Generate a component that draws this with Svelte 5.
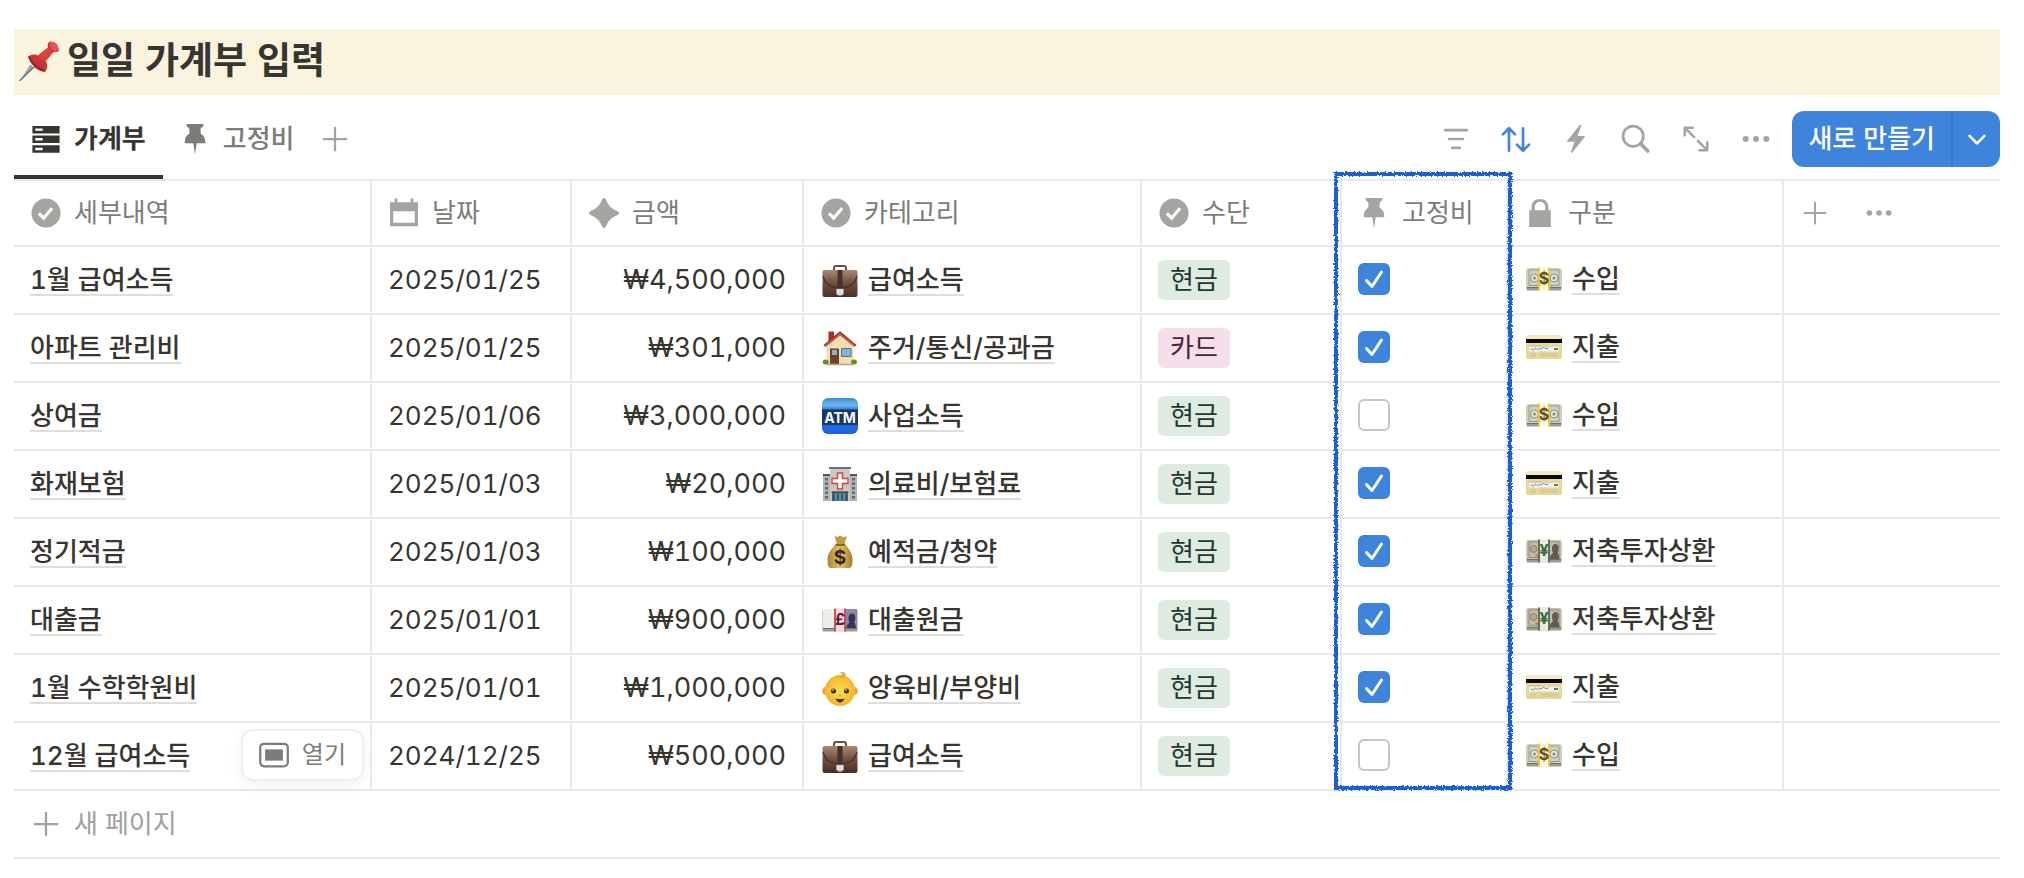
<script lang="ts">
	type Entry = {
		name: string;
		date: string;
		amount: string;
		icon: string;
		category: string;
		method: string;
		fixed: boolean;
		kind: string;
		open?: boolean;
	};

	let entries: Entry[] = $state([
		{ name: '1월 급여소득', date: '2025/01/25', amount: '4,500,000', icon: 'briefcase', category: '급여소득', method: '현금', fixed: true, kind: '수입' },
		{ name: '아파트 관리비', date: '2025/01/25', amount: '301,000', icon: 'house', category: '주거/통신/공과금', method: '카드', fixed: true, kind: '지출' },
		{ name: '상여금', date: '2025/01/06', amount: '3,000,000', icon: 'atm', category: '사업소득', method: '현금', fixed: false, kind: '수입' },
		{ name: '화재보험', date: '2025/01/03', amount: '20,000', icon: 'hospital', category: '의료비/보험료', method: '현금', fixed: true, kind: '지출' },
		{ name: '정기적금', date: '2025/01/03', amount: '100,000', icon: 'bag', category: '예적금/청약', method: '현금', fixed: true, kind: '저축투자상환' },
		{ name: '대출금', date: '2025/01/01', amount: '900,000', icon: 'pound', category: '대출원금', method: '현금', fixed: true, kind: '저축투자상환' },
		{ name: '1월 수학학원비', date: '2025/01/01', amount: '1,000,000', icon: 'baby', category: '양육비/부양비', method: '현금', fixed: true, kind: '지출' },
		{ name: '12월 급여소득', date: '2024/12/25', amount: '500,000', icon: 'briefcase', category: '급여소득', method: '현금', fixed: false, kind: '수입', open: true }
	]);

	const columns = [
		{ label: '세부내역', icon: 'check', cls: 'name' },
		{ label: '날짜', icon: 'calendar', cls: 'date' },
		{ label: '금액', icon: 'sparkle', cls: 'amount' },
		{ label: '카테고리', icon: 'check', cls: 'category' },
		{ label: '수단', icon: 'check', cls: 'method' },
		{ label: '고정비', icon: 'pin', cls: 'fixed' },
		{ label: '구분', icon: 'lock', cls: 'kind' }
	];

	const kindIcons: Record<string, string> = {
		수입: 'dollar',
		지출: 'card',
		저축투자상환: 'yen'
	};
</script>

{#snippet glyph(name: string)}
	<svg class="glyph" viewBox="0 0 32 32" aria-hidden="true">
		{#if name === 'check'}
			<circle cx="16" cy="16" r="15.500" fill="currentColor" />
			<path d="M8.500 16.500l5 5 9-10.500" fill="none" stroke="#fff" stroke-width="3.400" />
		{:else if name === 'calendar'}
			<path d="M1 4.500h5V.500h3v4h14v-4h3v4h5V30H1zM4.500 14v12.500h23V14z" fill="currentColor" fill-rule="evenodd" />
		{:else if name === 'sparkle'}
			<path d="M16 0q1.500 0 2 1.500C20.500 8 24 11.500 30.500 14q1.500.700 1.500 2t-1.500 2C24 20.500 20.500 24 18 30.500q-.700 1.500-2 1.500t-2-1.500C11.500 24 8 20.500 1.500 18Q0 17.300 0 16t1.500-2C8 11.500 11.500 8 14 1.500 14.500 0 16 0z" fill="currentColor" />
		{:else if name === 'pin'}
			<path d="M7 0h18v2.200l-3 2.600v5.400q5 3.200 5 9v1.300h-9.200L16 32.500l-1.800-12H5v-1.300q0-5.800 5-9V4.800L7 2.200z" fill="currentColor" />
		{:else if name === 'lock'}
			<path d="M4.500 13H7V9.500C7 4.500 10.500 1 16 1s9 3.500 9 8.500V13h2.500v18h-23zM10.500 13h11V9.500c0-3-2-5.200-5.500-5.200s-5.500 2.200-5.500 5.200z" fill="currentColor" fill-rule="evenodd" />
		{:else if name === 'list'}
			<path d="M1.500 2h29v8h-29zM4.500 4.700v2.600h8V4.700zM1.500 12.300h29v8h-29zM4.500 15v2.600h8V15zM1.500 22.600h29v8h-29zM4.500 25.300v2.600h8v-2.600z" fill="currentColor" fill-rule="evenodd" />
		{:else if name === 'plus'}
			<path d="M16 4v24M4 16h24" stroke="currentColor" stroke-width="2.400" stroke-linecap="round" />
		{:else if name === 'dots'}
			<g fill="currentColor"><circle cx="5" cy="16" r="3.200" /><circle cx="16" cy="16" r="3.200" /><circle cx="27" cy="16" r="3.200" /></g>
		{:else if name === 'filter'}
			<path d="M4.500 6.500h23M8.500 16h15M12 25.500h8" stroke="currentColor" stroke-width="2.800" stroke-linecap="round" />
		{:else if name === 'sort'}
			<path d="M8.500 28.500V4.500M2 11l6.500-6.500L15 11M23.500 4.500v24M17 22l6.500 6.500L30 22" fill="none" stroke="currentColor" stroke-width="2.800" stroke-linecap="round" stroke-linejoin="round" />
		{:else if name === 'bolt'}
			<path d="M20 1L6.500 18q-.500 1 .500 1h7.300L10.500 30.200q0 1.300 1.200.500L25.300 14q.500-1.200-.600-1.200H17.800L21.500 1.900Q21.500 0 20 1z" fill="currentColor" />
		{:else if name === 'search'}
			<circle cx="13" cy="13" r="10.800" fill="none" stroke="currentColor" stroke-width="2.900" />
			<path d="M21 21l7.500 7.800" stroke="currentColor" stroke-width="4" stroke-linecap="round" />
		{:else if name === 'expand'}
			<path d="M4 12V4h8.500M5 5l9 9M28 19.500V28h-8.500M27 27l-9-9" fill="none" stroke="currentColor" stroke-width="2.700" stroke-linecap="round" stroke-linejoin="round" />
		{:else if name === 'chevron'}
			<path d="M7.500 12.500l8.500 8.500 8.500-8.500" fill="none" stroke="currentColor" stroke-width="3" stroke-linecap="round" stroke-linejoin="round" />
		{:else if name === 'peek'}
			<rect x="1.300" y="4" width="29.400" height="24" rx="4" fill="none" stroke="currentColor" stroke-width="2.400" />
			<rect x="6.500" y="10" width="19" height="12" fill="currentColor" />
		{/if}
	</svg>
{/snippet}

{#snippet bundle(sign: string, paper: string, ink: string, band: string, edge: string, text: string)}
	<rect x=".5" y="8" width="35" height="21.500" rx="1" fill="#9d9c92" />
	<rect x="1" y="7" width="34" height="19.500" rx="1" fill={paper} />
	<rect x="3" y="9" width="30" height="15.500" fill="none" stroke={ink} stroke-width=".8" />
	{#if sign === '$'}
		<circle cx="8.500" cy="17" r="4" fill="#e6e6d8" stroke={ink} />
		<circle cx="28" cy="17" r="4" fill="#e6e6d8" stroke={ink} />
		<circle cx="28" cy="17" r="1.500" fill="#5d9c70" />
		<circle cx="8.500" cy="17" r="1.500" fill={ink} />
	{:else if sign === '£'}
		<rect x="1" y="7" width="11.500" height="19.500" fill="#efeee8" />
		<rect x="23.500" y="7" width="11.500" height="19.500" fill="#8d86a6" />
		<path d="M24.500 26.500c0-4 2-5 3-6-2-4-1-9 2.500-9s4 5 2 9c1 1 2 3 2 6z" fill="#39325a" />
	{:else}
		<circle cx="7.500" cy="16" r="3.500" fill="#b5a592" stroke={ink} />
		<path d="M24 26c0-4 2-5 3-6-2-4-1-9 2.500-9s4 5 2 9c1 1 2 3 2 6z" fill="#665a50" />
		<path d="M9.500 22.500h2" stroke="#d9562f" stroke-width="2" />
	{/if}
	<path d="M1 26.500h34" stroke="#73726a" />
	<path d="M12.500 6.500h11V30h-11z" fill={band} />
	<path d="M13 6.500v23M23 6.500v23" stroke={edge} stroke-width="1.600" />
	<text x="18" y="23" text-anchor="middle" font-size="16" font-weight="700" fill={text}>{sign}</text>
{/snippet}

{#snippet emoji(name: string)}
	<svg class="emoji" viewBox="0 0 36 36" aria-hidden="true">
		{#if name === 'briefcase'}
			<path d="M12 9V6q0-2 2-2h8q2 0 2 2v3" fill="none" stroke="#6a4d40" stroke-width="2" />
			<rect x=".5" y="8" width="35" height="27" rx="2" fill="url(#leather)" />
			<path d="M1 14c2 8 8 12 17 12s15-4 17-12" fill="none" stroke="#4b3028" stroke-width="1.200" />
			<rect x="15.500" y="8" width="5" height="20" fill="#4a3028" />
			<path d="M14.500 27h7v5q-3.500 3-7 0z" fill="#dedede" stroke="#aaa" stroke-width=".5" />
		{:else if name === 'house'}
			<path d="M6.500 1.500h5.500V10l-5.500 4z" fill="#9e332c" />
			<path d="M4.500 14L18 2.500 31.500 14v20h-27z" fill="#eedfb7" />
			<path d="M2 15.500L18 2.200l16 13.300" fill="none" stroke="#353535" stroke-width="1.500" />
			<path d="M2.700 16L18 3.700 33.300 16" fill="none" stroke="#cf4538" stroke-width="2.400" />
			<rect x="8" y="18.500" width="9" height="15.500" fill="#70402a" />
			<rect x="10" y="20" width="5" height="5" fill="#83b4db" />
			<rect x="19.500" y="18.500" width="9.500" height="8" fill="#78b5e6" stroke="#7a6d59" />
			<ellipse cx="3.700" cy="32" rx="3" ry="2.500" fill="#638b35" /><ellipse cx="32" cy="32" rx="3" ry="2.500" fill="#638b35" />
			<path d="M4 34.500h28" stroke="#b7a47e" stroke-width="1.500" />
		{:else if name === 'atm'}
			<rect width="36" height="36" rx="6" fill="url(#atm)" />
			<rect y="11.500" width="36" height="15.500" fill="#173765" />
			<text x="18" y="24.500" text-anchor="middle" font-size="14" font-weight="700" fill="#fff">ATM</text>
		{:else if name === 'hospital'}
			<path d="M1 9h7v26H1zM28 9h7v26h-7z" fill="#b4b4b4" />
			<path d="M1 9h7M28 9h7" stroke="#555" stroke-width="2" />
			<path d="M8 3h20v32H8z" fill="#c9c9c7" />
			<path d="M7 2h22" stroke="#6f6f6c" stroke-width="2" />
			<path d="M4.500 12v22M31.500 12v22" stroke="#4a7186" stroke-width="3" stroke-dasharray="2.500 2" />
			<path d="M15.500 7h5v5.500H26v5h-5.500V23h-5v-5.500H10v-5h5.500z" fill="#fff" stroke="#df3e3e" stroke-width="1.400" />
			<rect x="10" y="26" width="16" height="9" fill="#376178" />
			<path d="M9.500 26h17" stroke="#4a4a4a" stroke-width="1.500" />
			<path d="M14 27v8M18 27v8M22 27v8" stroke="#a9c4d0" stroke-width=".8" />
		{:else if name === 'bag'}
			<path d="M12.500 2l3 1 2.500-1.500L21 3l4-.500-3 8h-7z" fill="#c49a3d" />
			<path d="M14 10h9c4 5 7.500 9 7.500 16 0 5-1 8-3 8h-19c-2 0-3-3-3-8C5.500 19 10 14 14 10z" fill="url(#sack)" />
			<path d="M13.500 10.500q4.500 1.500 9.500 0" stroke="#86621d" stroke-width="2" fill="none" />
			<text x="18" y="30" text-anchor="middle" font-size="19" font-weight="700" fill="#35281a">$</text>
		{:else if name === 'baby'}
			<ellipse cx="3.500" cy="21" rx="3.200" ry="4" fill="#f0a72f" /><ellipse cx="32.500" cy="21" rx="3.200" ry="4" fill="#f0a72f" />
			<ellipse cx="18" cy="20.500" rx="15" ry="15.500" fill="url(#face)" />
			<path d="M18 8c5 1 7-2 5-5-2-2-5-1-5 1 1-1 3 0 2 1-1 1-3 1-4-1" fill="#e9a728" />
			<circle cx="11.500" cy="21" r="2.500" fill="#41301d" /><circle cx="24.500" cy="21" r="2.500" fill="#41301d" />
			<circle cx="11" cy="20" r=".8" fill="#fff" /><circle cx="24" cy="20" r=".8" fill="#fff" />
			<path d="M17 25.500q1 .800 2 0" stroke="#c97a1c" fill="none" />
			<path d="M13.500 28.500q4.500 1 9 0-1.500 4-4.500 4t-4.500-4z" fill="#52301a" />
		{:else if name === 'card'}
			<rect y="6.500" width="36" height="23.500" rx="1.500" fill="#e4d89a" />
			<rect x=".5" y="7" width="35" height="4" fill="#f2ebbf" />
			<rect y="10" width="36" height="4" fill="#080808" />
			<rect x="3" y="18" width="30" height="4.500" fill="#f4f3ed" />
			<path d="M4.500 21c2-3 2 2 4-1s2 2 4 0 2 1 4-1 2 2 6 0" stroke="#4771b8" fill="none" stroke-width=".9" />
			<path d="M28 20h4" stroke="#444" stroke-width="1.500" />
			<path d="M3 16.500h13M4 25h6M4 27h6M14 25h18M14 27h18" stroke="#c9bd86" stroke-width=".8" />
		{:else if name === 'dollar'}
			{@render bundle('$', '#cfd0bd', '#8d927b', '#fff8dc', '#efbc34', '#68501b')}
		{:else if name === 'yen'}
			{@render bundle('¥', '#c6bda8', '#8b8274', '#e2ebdf', '#435544', '#40693b')}
		{:else if name === 'pound'}
			{@render bundle('£', '#deddd7', '#aaa6b4', '#edd9dc', '#b23b48', '#69202c')}
		{:else if name === 'pushpin'}
			<path d="M13 24L.5 36 10.500 21z" fill="#91a5b4" />
			<path d="M.5 36L14 23" stroke="#536471" stroke-width="1" />
			<path d="M8 14q5-3 9-1l9-7q-1-4 2-5.500Q35 1 36 8q-1 2.500-5 2l-7 8q3 5-.500 10Q13 27 8 14z" fill="#ca3432" />
			<path d="M17 13l9-7 5 4-7 8q-5-1-7-5z" fill="#d9443f" />
			<path d="M9 14q2 8 14 13" stroke="#8f2023" stroke-width="1.500" fill="none" />
			<ellipse cx="31.500" cy="5" rx="3" ry="5" transform="rotate(-40 31.500 5)" fill="#e2564d" />
		{/if}
	</svg>
{/snippet}

<svg class="defs" width="0" height="0" aria-hidden="true">
	<defs>
		<linearGradient id="leather" x2="0" y2="1">
			<stop offset="0" stop-color="#a98a70" />
			<stop offset=".5" stop-color="#6e4e3f" />
			<stop offset="1" stop-color="#4a2e27" />
		</linearGradient>
		<linearGradient id="atm" x2="0" y2="1">
			<stop offset="0" stop-color="#3c8ade" />
			<stop offset=".2" stop-color="#72b7ec" />
			<stop offset=".32" stop-color="#2f7cd8" />
			<stop offset="1" stop-color="#1c5fe0" />
		</linearGradient>
		<linearGradient id="sack">
			<stop offset="0" stop-color="#a9822d" />
			<stop offset=".5" stop-color="#e7c56a" />
			<stop offset="1" stop-color="#a77d28" />
		</linearGradient>
		<radialGradient id="face">
			<stop offset="0" stop-color="#ffdc55" />
			<stop offset="1" stop-color="#f6b52e" />
		</radialGradient>
		<filter id="rough" x="-5%" y="-5%" width="110%" height="110%">
			<feTurbulence type="fractalNoise" baseFrequency=".6" numOctaves="2" seed="4" />
			<feDisplacementMap in="SourceGraphic" scale="4" xChannelSelector="R" yChannelSelector="G" />
		</filter>
	</defs>
</svg>

<main class="page">
	<h1 class="title">{@render emoji('pushpin')}<span>일일 가계부 입력</span></h1>

	<div class="toolbar">
		<div class="tabs" role="tablist">
			<button class="tab active" role="tab" aria-selected="true">{@render glyph('list')}가계부</button>
			<button class="tab" role="tab" aria-selected="false">{@render glyph('pin')}고정비</button>
			<button class="tab add" aria-label="보기 추가">{@render glyph('plus')}</button>
		</div>
		<div class="tools">
			<button class="tool" aria-label="필터">{@render glyph('filter')}</button>
			<button class="tool on" aria-label="정렬">{@render glyph('sort')}</button>
			<button class="tool" aria-label="자동화">{@render glyph('bolt')}</button>
			<button class="tool" aria-label="검색">{@render glyph('search')}</button>
			<button class="tool" aria-label="전체 화면">{@render glyph('expand')}</button>
			<button class="tool" aria-label="더 보기">{@render glyph('dots')}</button>
			<div class="create">
				<button class="create-main">새로 만들기</button>
				<button class="create-more" aria-label="템플릿">{@render glyph('chevron')}</button>
			</div>
		</div>
	</div>

	<div class="board">
		<table>
			<thead>
				<tr>
					{#each columns as column}
						<th class={column.cls}>
							<div class="head">{@render glyph(column.icon)}{column.label}</div>
						</th>
					{/each}
					<th>
						<div class="rest-tools">
							<button aria-label="속성 추가">{@render glyph('plus')}</button>
							<button aria-label="속성 메뉴">{@render glyph('dots')}</button>
						</div>
					</th>
				</tr>
			</thead>
			<tbody>
				{#each entries as entry}
					<tr>
						<td class="name">
							<a href="#entry">{entry.name}</a>
							{#if entry.open}
								<button class="peek">{@render glyph('peek')}열기</button>
							{/if}
						</td>
						<td>{entry.date}</td>
						<td class="amount">₩{entry.amount}</td>
						<td>
							<div class="relation">{@render emoji(entry.icon)}<a href="#category">{entry.category}</a></div>
						</td>
						<td><span class="tag" class:pink={entry.method === '카드'}>{entry.method}</span></td>
						<td class="flag"><input type="checkbox" aria-label="{entry.name} 고정비" bind:checked={entry.fixed} /></td>
						<td class="flag">
							<div class="relation">{@render emoji(kindIcons[entry.kind])}<a href="#kind">{entry.kind}</a></div>
						</td>
						<td></td>
					</tr>
				{/each}
			</tbody>
		</table>
		<div class="marker"></div>
	</div>

	<button class="new-page">{@render glyph('plus')}새 페이지</button>
</main>

<style>
	:global(body) {
		margin: 0;
		background: #fff;
	}

	.defs {
		position: absolute;
	}

	.page {
		padding: 29px 24px 19px 14px;
		color: #37352f;
		font-family: Inter, 'Noto Sans CJK KR', sans-serif;
		font-size: 26px;
		line-height: 28px;
		font-variant-numeric: tabular-nums;
	}

	button {
		padding: 0;
		border: 0;
		background: none;
		color: inherit;
		font: inherit;
		cursor: pointer;
	}

	.glyph {
		display: block;
		flex: none;
		width: 30px;
		height: 30px;
	}

	.emoji {
		display: block;
		flex: none;
		width: 36px;
		height: 36px;
		font-family: Inter, sans-serif;
	}

	.title {
		display: flex;
		align-items: center;
		gap: 8px;
		box-sizing: border-box;
		height: 66px;
		margin: 0;
		padding: 0 0 2px 5px;
		background: #faf3dd;
		font-size: 37px;
		font-weight: 700;
		line-height: 48px;
	}

	.title .emoji {
		width: 40px;
		height: 40px;
	}

	.toolbar {
		display: flex;
		justify-content: space-between;
		height: 84px;
	}

	.tabs,
	.tools {
		display: flex;
		align-items: center;
	}

	.tabs {
		align-items: stretch;
	}

	.tab {
		display: flex;
		align-items: center;
		gap: 13px;
		padding: 8px 17px 0;
		border-bottom: 4px solid transparent;
		color: #7d7c78;
		font-weight: 500;
	}

	.tab.active {
		border-color: #37352f;
		color: #37352f;
		font-weight: 700;
	}

	.tab:nth-child(2) {
		padding-right: 10px;
	}

	.tab.add {
		padding-left: 15px;
		color: #a5a4a1;
	}

	.tools {
		padding-top: 4px;
		color: #a5a4a1;
	}

	.tool {
		display: grid;
		place-items: center;
		width: 60px;
		height: 56px;
	}

	.tool.on {
		color: #3f84dc;
	}

	.create {
		display: flex;
		height: 56px;
		margin-left: 6px;
		border-radius: 12px;
		background: #3f84dc;
		color: #fff;
		overflow: hidden;
	}

	.create-main {
		padding: 0 16px;
		border-right: 2px solid #3976c6;
		font-weight: 500;
	}

	.create-more {
		display: grid;
		place-items: center;
		width: 47px;
	}

	.create-more .glyph {
		width: 28px;
		height: 28px;
	}

	.board {
		position: relative;
	}

	table {
		width: 100%;
		border-top: 2px solid #e9e9e7;
		border-spacing: 0;
		table-layout: fixed;
	}

	th,
	td {
		box-sizing: border-box;
		height: 68px;
		padding: 0 16px;
		border-right: 2px solid #e9e9e7;
		border-bottom: 2px solid #e9e9e7;
		text-align: left;
		vertical-align: middle;
		white-space: nowrap;
	}

	th {
		height: 66px;
		padding: 0 0 0 17px;
		color: #7d7c78;
		font-weight: 400;
	}

	th:last-child,
	td:last-child {
		border-right: 0;
	}

	th.name { width: 358px; }
	th.date { width: 200px; }
	th.amount { width: 232px; }
	th.category { width: 338px; }
	th.method { width: 200px; }
	th.fixed { width: 166px; }
	th.kind { width: 276px; }

	.head {
		display: flex;
		align-items: center;
		gap: 13px;
	}

	th .glyph {
		color: #a5a4a1;
	}

	.rest-tools {
		display: flex;
		gap: 36px;
	}

	.rest-tools .glyph {
		width: 28px;
		height: 28px;
	}

	td.name {
		position: relative;
	}

	td.amount {
		font-size: 27px;
		text-align: right;
	}

	td.flag {
		padding-bottom: 2px;
	}

	td a {
		display: inline-block;
		box-shadow: 0 2px 0 #dededc;
		color: inherit;
		font-weight: 500;
		text-decoration: none;
	}

	.relation {
		display: flex;
		align-items: center;
		gap: 10px;
		padding-left: 2px;
	}

	.tag {
		display: inline-block;
		padding: 0 12px;
		border-radius: 6px;
		background: #dfebe0;
		color: #203b2d;
		line-height: 40px;
	}

	.tag.pink {
		background: #f4dfeb;
		color: #4c2337;
	}

	input[type='checkbox'] {
		appearance: none;
		display: block;
		width: 32px;
		height: 32px;
		margin: 0;
		border: 2px solid #c7c6c4;
		border-radius: 6px;
		background: #fff;
		cursor: pointer;
	}

	input[type='checkbox']:checked {
		border: 0;
		background: #3f84dc url("data:image/svg+xml,%3Csvg xmlns='http://www.w3.org/2000/svg' viewBox='0 0 32 32'%3E%3Cpath d='M8.500 17.500l5.500 6L23.500 9' fill='none' stroke='white' stroke-width='3' stroke-linecap='round' stroke-linejoin='round'/%3E%3C/svg%3E");
	}

	.peek {
		position: absolute;
		top: 6px;
		right: 6px;
		display: flex;
		align-items: center;
		gap: 13px;
		height: 52px;
		padding: 0 16px;
		border: 2px solid #efefee;
		border-radius: 12px;
		background: #fff;
		box-shadow: 0 4px 16px rgba(15, 15, 15, 0.06);
		color: #7d7c78;
		font-size: 24px;
	}

	/* hand-drawn frame around the fixed cost column */
	.marker {
		position: absolute;
		top: -7px;
		bottom: 1px;
		left: 1320px;
		box-sizing: border-box;
		width: 178px;
		border: 4px solid #1f5fd3;
		filter: url(#rough);
		pointer-events: none;
	}

	.new-page {
		display: flex;
		align-items: center;
		gap: 13px;
		width: 100%;
		height: 68px;
		padding-left: 17px;
		border-bottom: 2px solid #e9e9e7;
		color: #a1a09c;
	}
</style>
